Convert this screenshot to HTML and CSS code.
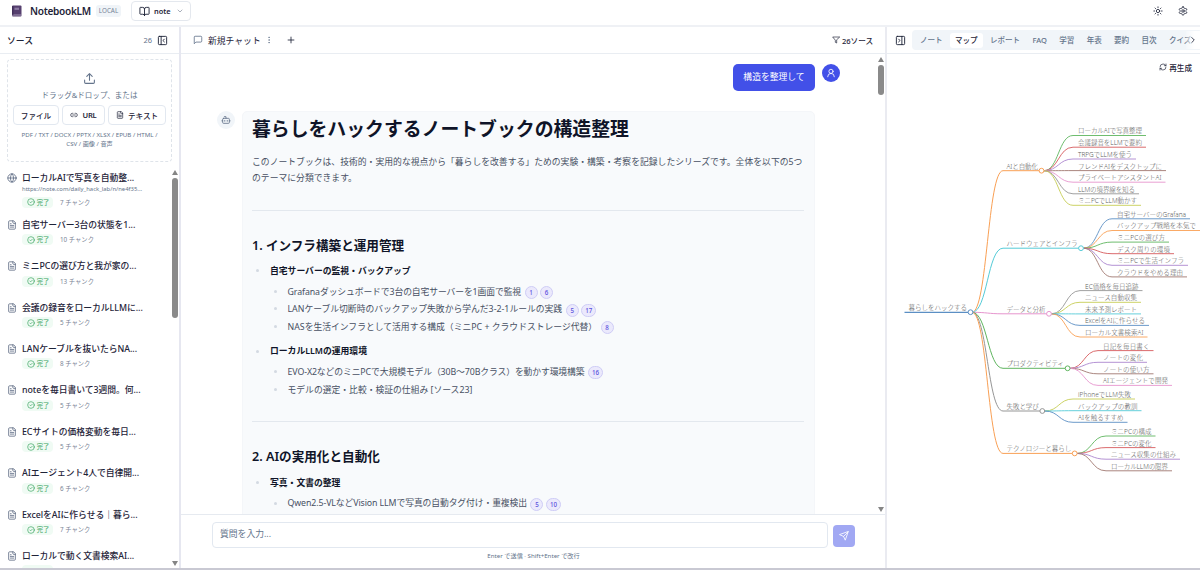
FILE: index.html
```html
<!DOCTYPE html>
<html lang="ja">
<head>
<meta charset="utf-8">
<title>NotebookLM</title>
<link rel="stylesheet" href="styles.css">
</head>
<body>
<svg class="defs" width="0" height="0">
  <symbol id="file" viewBox="0 0 24 24"><path d="M15 2H6a2 2 0 0 0-2 2v16a2 2 0 0 0 2 2h12a2 2 0 0 0 2-2V7z"/><path d="M14 2v4a2 2 0 0 0 2 2h4M10 9H8M16 13H8M16 17H8"/></symbol>
  <symbol id="globe" viewBox="0 0 24 24"><circle cx="12" cy="12" r="10"/><path d="M12 2a14.5 14.5 0 0 0 0 20 14.5 14.5 0 0 0 0-20M2 12h20"/></symbol>
  <symbol id="check" viewBox="0 0 24 24"><circle cx="12" cy="12" r="10"/><path d="m8.500 12 2.500 2.500 5-5"/></symbol>
  <symbol id="book" viewBox="0 0 24 24"><path d="M12 7v14M3 18a1 1 0 0 1-1-1V4a1 1 0 0 1 1-1h5a4 4 0 0 1 4 4 4 4 0 0 1 4-4h5a1 1 0 0 1 1 1v13a1 1 0 0 1-1 1h-6a3 3 0 0 0-3 3 3 3 0 0 0-3-3z"/></symbol>
  <symbol id="down" viewBox="0 0 24 24"><path d="m6 9 6 6 6-6"/></symbol>
  <symbol id="right" viewBox="0 0 24 24"><path d="m9 18 6-6-6-6"/></symbol>
  <symbol id="sun" viewBox="0 0 24 24"><circle cx="12" cy="12" r="4"/><path d="M12 2v2M12 20v2M4.9 4.9l1.4 1.4M17.7 17.7l1.4 1.4M2 12h2M20 12h2M6.3 17.7l-1.4 1.4M19.1 4.9l-1.4 1.4"/></symbol>
  <symbol id="gear" viewBox="0 0 24 24"><path d="M12.2 2h-.4a2 2 0 0 0-2 2v.2a2 2 0 0 1-1 1.700l-.4.3a2 2 0 0 1-2 0l-.2-.1a2 2 0 0 0-2.700.7l-.2.4a2 2 0 0 0 .7 2.700l.2.1a2 2 0 0 1 1 1.700v.5a2 2 0 0 1-1 1.800l-.2.1a2 2 0 0 0-.7 2.700l.2.4a2 2 0 0 0 2.700.7l.2-.1a2 2 0 0 1 2 0l.4.3a2 2 0 0 1 1 1.700v.2a2 2 0 0 0 2 2h.4a2 2 0 0 0 2-2v-.2a2 2 0 0 1 1-1.700l.4-.3a2 2 0 0 1 2 0l.2.1a2 2 0 0 0 2.700-.7l.2-.4a2 2 0 0 0-.7-2.700l-.2-.1a2 2 0 0 1-1-1.800v-.5a2 2 0 0 1 1-1.700l.2-.1a2 2 0 0 0 .7-2.700l-.2-.4a2 2 0 0 0-2.700-.7l-.2.1a2 2 0 0 1-2 0l-.4-.3a2 2 0 0 1-1-1.700V4a2 2 0 0 0-2-2z"/><circle cx="12" cy="12" r="3"/></symbol>
  <symbol id="panel-close" viewBox="0 0 24 24"><rect x="3" y="3" width="18" height="18" rx="2"/><path d="M9 3v18m7-6-3-3 3-3"/></symbol>
  <symbol id="panel-right" viewBox="0 0 24 24"><rect x="3" y="3" width="18" height="18" rx="2"/><path d="M15 3v18M8 9l3 3-3 3"/></symbol>
  <symbol id="upload" viewBox="0 0 24 24"><path d="M12 3v12M17 8l-5-5-5 5M21 15v4a2 2 0 0 1-2 2H5a2 2 0 0 1-2-2v-4"/></symbol>
  <symbol id="link" viewBox="0 0 24 24"><path d="M9 17H7A5 5 0 0 1 7 7h2M15 7h2a5 5 0 1 1 0 10h-2M8 12h8"/></symbol>
  <symbol id="chat" viewBox="0 0 24 24"><path d="M21 15a2 2 0 0 1-2 2H7l-4 4V5a2 2 0 0 1 2-2h14a2 2 0 0 1 2 2z"/></symbol>
  <symbol id="dots" viewBox="0 0 24 24"><circle cx="12" cy="4" r="1"/><circle cx="12" cy="12" r="1"/><circle cx="12" cy="20" r="1"/></symbol>
  <symbol id="plus" viewBox="0 0 24 24"><path d="M5 12h14M12 5v14"/></symbol>
  <symbol id="filter" viewBox="0 0 24 24"><path d="M22 3H2l8 9.5V19l4 2v-8.5z"/></symbol>
  <symbol id="user" viewBox="0 0 24 24"><circle cx="12" cy="8" r="5"/><path d="M20 21a8 8 0 0 0-16 0"/></symbol>
  <symbol id="bot" viewBox="0 0 24 24"><path d="M12 8V4H8"/><rect x="4" y="8" width="16" height="12" rx="2"/><path d="M2 14h2M20 14h2M15 13v2M9 13v2"/></symbol>
  <symbol id="refresh" viewBox="0 0 24 24"><path d="M3 12a9 9 0 0 1 9-9 9.8 9.8 0 0 1 6.7 2.7L21 8M21 3v5h-5M21 12a9 9 0 0 1-9 9 9.800 9.800 0 0 1-6.700-2.700L3 16M8 16H3v5"/></symbol>
  <symbol id="send" viewBox="0 0 24 24"><path d="M22 2 15 22l-4-9-9-4zM22 2 11 13"/></symbol>
</svg>

<div class="app">
  <header class="topbar">
    <svg class="logo" viewBox="0 0 11 12"><rect x="1" y=".5" width="9.500" height="11" rx="1" fill="#56406f"/><path d="M1 10h9.500" stroke="#b9aec8" stroke-width=".8"/><rect x="3.500" y="2.700" width="4.500" height="2.200" fill="#8c7aa3"/><path d="M1.800 1v9" stroke="#3a2950" stroke-width="1"/></svg>
    <span class="brand">NotebookLM</span>
    <span class="local">LOCAL</span>
    <button class="picker"><svg class="i i11"><use href="#book"/></svg><span>note</span><svg class="i i8 soft"><use href="#down"/></svg></button>
    <span class="grow"></span>
    <svg class="i i10"><use href="#sun"/></svg>
    <svg class="i i10 gear"><use href="#gear"/></svg>
  </header>

  <main class="columns">
    <aside class="sources">
      <div class="head"><span class="head-title">ソース</span><span class="grow"></span><span class="count">26</span><svg class="i i11"><use href="#panel-close"/></svg></div>
      <div class="drop">
        <svg class="i i13 slate"><use href="#upload"/></svg>
        <p class="drop-text">ドラッグ&amp;ドロップ、または</p>
        <div class="drop-buttons">
          <button class="btn b-file">ファイル</button>
          <button class="btn b-url"><svg class="i i8"><use href="#link"/></svg>URL</button>
          <button class="btn b-text"><svg class="i i8"><use href="#file"/></svg>テキスト</button>
        </div>
        <p class="formats">PDF / TXT / DOCX / PPTX / XLSX / EPUB / HTML /<br>CSV / 画像 / 音声</p>
      </div>
      <div class="list-wrap">
        <div class="list" id="list"></div>
        <div class="scroll"><i class="up"></i><i class="thumb thumb-list"></i><span class="grow"></span><i class="dn"></i></div>
      </div>
    </aside>

    <section class="chat">
      <div class="head chat-head">
        <svg class="i i10 slate"><use href="#chat"/></svg><span class="chat-tab">新規チャット</span><svg class="i i8 slate"><use href="#dots"/></svg>
        <svg class="i i10 add"><use href="#plus"/></svg><span class="grow"></span>
        <svg class="i i8"><use href="#filter"/></svg><span class="filter">26ソース</span>
      </div>
      <div class="stream">
        <div class="messages">
          <div class="mine"><span class="bubble">構造を整理して</span><span class="avatar me"><svg class="i i10"><use href="#user"/></svg></span></div>
          <div class="reply">
            <span class="avatar bot"><svg class="i i10"><use href="#bot"/></svg></span>
            <article class="card">
              <h1>暮らしをハックするノートブックの構造整理</h1>
              <p>このノートブックは、技術的・実用的な視点から「暮らしを改善する」ための実験・構築・考察を記録したシリーズです。全体を以下の5つ<br>のテーマに分類できます。</p>
              <hr>
              <h2>1. インフラ構築と運用管理</h2>
              <ul class="topics">
                <li><strong>自宅サーバーの監視・バックアップ</strong>
                  <ul>
                    <li><span class="tight">Grafanaダッシュボードで3台の自宅サーバーを1画面で監視</span><b>1</b><b>6</b></li>
                    <li><span>LANケーブル切断時のバックアップ失敗から学んだ3-2-1ルールの実践</span><b>5</b><b>17</b></li>
                    <li><span>NASを生活インフラとして活用する構成（ミニPC + クラウドストレージ代替）</span><b>8</b></li>
                  </ul></li>
                <li><strong>ローカルLLMの運用環境</strong>
                  <ul>
                    <li><span class="tight">EVO-X2などのミニPCで大規模モデル（30B～70Bクラス）を動かす環境構築</span><b>16</b></li>
                    <li><span>モデルの選定・比較・検証の仕組み [ソース23]</span></li>
                  </ul></li>
              </ul>
              <hr>
              <h2>2. AIの実用化と自動化</h2>
              <ul class="topics">
                <li><strong>写真・文書の整理</strong>
                  <ul><li><span class="tight">Qwen2.5-VLなどVision LLMで写真の自動タグ付け・重複検出</span><b>5</b><b>10</b></li></ul></li>
              </ul>
            </article>
          </div>
        </div>
        <div class="scroll"><i class="up"></i><i class="thumb thumb-chat"></i><span class="grow"></span><i class="dn"></i></div>
      </div>
      <div class="composer">
        <div class="compose-row"><div class="field">質問を入力...</div><button class="send"><svg class="i i10"><use href="#send"/></svg></button></div>
        <p class="hint">Enter で送信 · Shift+Enter で改行</p>
      </div>
    </section>

    <aside class="studio">
      <div class="head studio-head">
        <svg class="i i11"><use href="#panel-right"/></svg>
        <nav class="tabs"><span>ノート</span><span class="on">マップ</span><span>レポート</span><span>FAQ</span><span>学習</span><span>年表</span><span>要約</span><span>目次</span><span>クイズ</span></nav>
        <span class="more"><svg class="i i10"><use href="#right"/></svg></span>
      </div>
      <div class="regen"><svg class="i i8"><use href="#refresh"/></svg>再生成</div>
      <svg class="map" id="map" viewBox="887 80 313 488"></svg>
    </aside>
  </main>
</div>
<script src="app.js"></script>
</body>
</html>
```
FILE: styles.css
```css
* { box-sizing: border-box; }
body { margin: 0; background: #fff; color: #1e2338; font-family: "Noto Sans", "Noto Sans CJK JP", sans-serif; font-size: 8.8px; }
h1, h2, p, ul { margin: 0; padding: 0; }
ul { list-style: none; }
button { font: inherit; color: inherit; background: #fff; padding: 0; }
.defs { display: none; }
.app { width: 1200px; height: 570px; display: flex; flex-direction: column; overflow: hidden; border-bottom: 2px solid #c9c9d3; }
.grow { flex: 1; }
.i { fill: none; stroke: currentColor; stroke-width: 2; stroke-linecap: round; stroke-linejoin: round; flex: none; display: block; }
.i8 { width: 8px; height: 8px; }
.i10 { width: 10px; height: 10px; }
.i11 { width: 11px; height: 11px; }
.i13 { width: 13px; height: 13px; }
.slate { color: #64748b; }
.soft { color: #7d8798; }

.topbar { height: 27px; flex: none; display: flex; align-items: center; padding: 0 12px 3px 11px; border-bottom: 2px solid #eff1f5; }
.logo { width: 11px; height: 12px; }
.brand { margin-left: 8px; font-size: 10.1px; font-weight: 600; width: 60px; white-space: nowrap; letter-spacing: -.3px; }
.local { margin-left: 6px; width: 25px; height: 12px; line-height: 12px; border-radius: 3px; background: #f0f4f8; color: #748296; font-size: 6.3px; text-align: center; }
.picker { margin-left: 10px; width: 60px; height: 20px; border: 1px solid #e4e8ee; border-radius: 4px; display: flex; align-items: center; padding: 0 7px; font-size: 7.4px; font-weight: 600; }
.picker span { margin: 0 5px 0 4px; }
.gear { margin-left: 15px; }

.columns { flex: 1; display: flex; min-height: 0; }
.head { height: 27px; flex: none; display: flex; align-items: center; border-bottom: 1px solid #e9edf2; white-space: nowrap; }
.sources { width: 181px; border-right: 2px solid #e6e7f0; display: flex; flex-direction: column; }
.sources .head { padding: 0 11px 0 7px; }
.head-title { font-size: 8.8px; font-weight: 500; }
.count { color: #64748b; font-size: 7.5px; margin-right: 5px; }
.drop { margin: 5px 7px 0; height: 103px; flex: none; border: 1px dashed #dfe4ea; border-radius: 4px; display: flex; flex-direction: column; align-items: center; padding-top: 12px; }
.drop-text { margin-top: 4px; line-height: 13px; font-size: 7.55px; color: #64748b; white-space: nowrap; }
.drop-buttons { display: flex; gap: 3px; margin-top: 3px; }
.btn { height: 20px; border: 1px solid #e2e8f0; border-radius: 4px; display: flex; align-items: center; justify-content: center; gap: 4px; font-size: 7.6px; font-weight: 500; white-space: nowrap; }
.b-file { width: 46px; }
.b-url { width: 43px; font-weight: 600; letter-spacing: -.2px; }
.b-text { width: 58px; }
.formats { margin-top: 5px; line-height: 9.3px; font-size: 6.15px; color: #64748b; text-align: center; white-space: nowrap; }

.list-wrap { flex: 1; min-height: 0; display: flex; padding-top: 5px; }
.list { flex: 1; overflow: hidden; padding-left: 7px; }
.source { display: flex; gap: 5px; height: 41.4px; padding-top: 4px; }
.source:first-child { height: 46.8px; }
.source > .i { margin-top: 2px; color: #5f6c84; }
.name { height: 14px; line-height: 14px; font-weight: 500; white-space: nowrap; letter-spacing: -.04px; }
.url { height: 9px; line-height: 9px; font-size: 5.9px; color: #64748b; }
.meta { display: flex; align-items: center; margin-top: 2.500px; font-size: 6.3px; color: #7a8496; line-height: 11px; }
.badge { width: 31px; height: 11px; border-radius: 4px; background: #f0fbf4; color: #38a35f; display: flex; align-items: center; justify-content: center; gap: 2px; margin-right: 7px; font-size: 6.3px; padding-left: 1px; }

.scroll { width: 8px; flex: none; display: flex; flex-direction: column; align-items: center; }
.up { border: 3px solid transparent; border-top: 0; border-bottom: 5px solid #858585; }
.dn { border: 3px solid transparent; border-bottom: 0; border-top: 5px solid #858585; }
.thumb { width: 5.500px; border-radius: 3px; background: #8a8a8a; margin-top: 3px; }
.thumb-list { height: 140px; }
.list-wrap .scroll { padding: 3px 0 2px; }
.thumb-chat { height: 30px; }

.chat { width: 706px; border-right: 2px solid #eaebf1; display: flex; flex-direction: column; }
.chat-head { padding: 0 12px 0 12px; }
.chat-tab { margin: 0 4px 0 5px; }
.add { margin-left: 13px; }
.filter { margin-left: 2px; font-size: 7.6px; font-weight: 500; }
.stream { flex: 1; min-height: 0; display: flex; }
.stream .scroll { padding: 3px 0 2px; }
.messages { flex: 1; min-width: 0; overflow: hidden; padding: 10px 37px 0 36px; }
.mine { height: 47px; display: flex; justify-content: flex-end; gap: 7px; align-items: flex-start; }
.bubble { width: 82px; height: 27px; line-height: 26px; border-radius: 5px; background: #4250e8; color: #fff; text-align: center; }
.avatar { width: 18px; height: 18px; border-radius: 50%; display: flex; align-items: center; justify-content: center; flex: none; }
.me { background: #4250e8; color: #fff; }
.bot { background: #f1f5f9; color: #64748b; }
.reply { display: flex; gap: 7px; }
.card { width: 573px; height: 420px; flex: none; background: #f8fafc; border: 1px solid #f4f6f9; border-radius: 5px; padding: 5px 10px 0 9px; color: #475063; }
.card h1 { font-size: 18.85px; line-height: 24px; font-weight: 700; color: #0f1428; white-space: nowrap; }
.card p { margin-top: 14.400px; line-height: 15.400px; white-space: nowrap; letter-spacing: .02px; }
.card hr { margin: 23.800px 0 0; border: 0; border-top: 1px solid #e3e8ee; }
.card h2 { margin-top: 25.500px; line-height: 18px; font-size: 12.6px; font-weight: 600; color: #0f1428; }
.topics { margin-top: 8.300px; }
.topics > li { position: relative; padding-left: 18px; margin-bottom: 7px; line-height: 17px; }
.topics > li:last-child { margin-bottom: 0; }
.topics + hr { margin-top: 22.400px; }
.topics + hr + h2 { margin-top: 26px; }
.topics strong { font-weight: 600; color: #0f1428; }
.topics li li { position: relative; padding-left: 17.500px; height: 17.700px; display: flex; align-items: center; white-space: nowrap; }
.topics ul { padding-top: 3.400px; }
.topics li::before { content: ""; position: absolute; left: 4px; top: 6.500px; width: 3px; height: 3px; border-radius: 50%; background: #d3d9e2; }
.topics .tight { letter-spacing: -.1px; }
.topics b { min-width: 13px; height: 13px; line-height: 11px; border: 1px solid #cfcdf6; border-radius: 7px; background: #ebe9fc; color: #5a50dc; font-size: 6.2px; font-weight: 500; text-align: center; padding: 0 3px; margin: 1px -1px 0 3.500px; }

.composer { height: 54px; flex: none; border-top: 1px solid #e6eaf0; padding: 7px 30px 0 31px; }
.compose-row { display: flex; gap: 5px; align-items: flex-end; }
.field { width: 616px; height: 26px; line-height: 23px; border: 1px solid #e2e8f0; border-radius: 4px; padding-left: 7px; color: #64748b; }
.send { width: 22px; height: 22px; margin-bottom: 1px; border: 0; border-radius: 4px; background: #a1a8f3; color: #fff; display: flex; align-items: center; justify-content: center; }
.hint { margin-top: 3px; font-size: 6.15px; line-height: 10px; color: #64748b; text-align: center; }

.studio { flex: 1; min-width: 0; display: flex; flex-direction: column; }
.studio-head { position: relative; padding-left: 8px; }
.tabs { margin-left: 6px; height: 20px; flex: none; width: 290px; border-radius: 4px; background: #f1f5f9; display: flex; align-items: center; gap: 2.300px; padding: 0 3px; color: #64748b; font-size: 7.55px; font-weight: 500; overflow: hidden; }
.tabs span { padding: 0 5px; height: 15px; line-height: 14px; flex: none; }
.tabs .on { background: #fff; border-radius: 3px; color: #1e2338; }
.more { position: absolute; right: 0; top: 4px; width: 14px; height: 18px; display: flex; align-items: center; justify-content: center; background: linear-gradient(to right, rgba(255,255,255,.2), #fff 60%); }
.regen { height: 26px; flex: none; display: flex; align-items: center; justify-content: flex-end; gap: 2.500px; padding-right: 8px; font-size: 7.6px; font-weight: 500; }
.map { width: 313px; height: 488px; flex: none; display: block; }
.map text { font-size: 6.5px; font-weight: 300; fill: #5c5c5c; }
```
FILE: app.js
```js
const SVG = 'http://www.w3.org/2000/svg';

const sources = [
  ['ローカルAIで写真を自動整...', 7],
  ['自宅サーバー3台の状態を1...', 10],
  ['ミニPCの選び方と我が家の...', 13],
  ['会議の録音をローカルLLMに...', 5],
  ['LANケーブルを抜いたらNA...', 8],
  ['noteを毎日書いて3週間。何...', 5],
  ['ECサイトの価格変動を毎日...', 5],
  ['AIエージェント4人で自律開...', 6],
  ['ExcelをAIに作らせる｜暮ら...', 7],
  ['ローカルで動く文書検索AI...', null],
];

document.getElementById('list').innerHTML = sources.map(([name, chunks], n) => `
  <div class="source">
    <svg class="i i10"><use href="#${n ? 'file' : 'globe'}"/></svg>
    <div>
      <div class="name">${name}</div>
      ${n ? '' : '<div class="url">https://note.com/daily_hack_lab/n/ne4f35...</div>'}
      <div class="meta">${chunks ? `<span class="badge"><svg class="i i8"><use href="#check"/></svg>完了</span>${chunks} チャンク` : '<span class="badge"></span>'}</div>
    </div>
  </div>`).join('');

// Branch: label, colour, y, node x, leaf start x, leaves [label, y, end x, colour]
const C = { blue: '#5b8fc4', orange: '#f9a055', green: '#5fb55f', red: '#d65a5c', purple: '#ab86cf', brown: '#a07870', pink: '#e695ce', gray: '#969696', olive: '#c6cd55', cyan: '#55cbd7' };
const branches = [
  ['AIと自動化', 'orange', 170.7, 1041.5, 1073, [
    ['ローカルAIで写真整理', 135.5, 1146, 'green'], ['会議録音をLLMで要約', 147.2, 1146, 'red'],
    ['TRPGでLLMを使う', 159, 1136, 'purple'], ['フレンドAIをデスクトップに', 170.6, 1166, 'brown'],
    ['プライベートアシスタントAI', 182.2, 1165.500, 'pink'], ['LLMの境界線を知る', 193.8, 1139, 'gray'],
    ['ミニPCでLLM動かす', 205.3, 1141, 'olive']]],
  ['ハードウェアとインフラ', 'cyan', 248.2, 1081, 1112, [
    ['自宅サーバーのGrafana', 218.8, 1190, 'blue'], ['バックアップ戦略を本気で', 230.5, 1200, 'orange'],
    ['ミニPCの選び方', 242.1, 1169, 'green'], ['デスク周りの環境', 253.7, 1174, 'red'],
    ['ミニPCで生活インフラ', 265.3, 1188, 'purple'], ['クラウドをやめる理由', 276.9, 1187, 'brown']]],
  ['データと分析', 'pink', 313.8, 1049, 1080, [
    ['EC価格を毎日追跡', 290.6, 1142.500, 'gray'], ['ニュース自動収集', 302.3, 1141, 'olive'],
    ['未来予測レポート', 313.9, 1141, 'cyan'], ['ExcelをAIに作らせる', 325.4, 1149, 'blue'],
    ['ローカル文書検索AI', 337, 1147.500, 'orange']]],
  ['プロダクティビティ', 'green', 368.3, 1067.6, 1098, [
    ['日記を毎日書く', 350.6, 1153.500, 'red'], ['ノートの変化', 362.3, 1147, 'purple'],
    ['ノートの使い方', 373.8, 1153.500, 'brown'], ['AIエージェントで開発', 385.4, 1172, 'pink']]],
  ['失敗と学び', 'gray', 411, 1042.3, 1073, [
    ['iPhoneでLLM失敗', 399, 1135, 'olive'], ['バックアップの教訓', 410.7, 1141.500, 'cyan'],
    ['AIを触るすすめ', 422.3, 1127.500, 'blue']]],
  ['テクノロジーと暮らし', 'orange', 453.4, 1074.7, 1106, [
    ['ミニPCの構成', 436, 1155.500, 'green'], ['ミニPCの変化', 447.6, 1155.500, 'red'],
    ['ニュース収集の仕組み', 459.2, 1180, 'purple'], ['ローカルLLMの限界', 470.8, 1172, 'brown']]],
];

const map = document.getElementById('map');
function add(tag, attrs, text) {
  const el = document.createElementNS(SVG, tag);
  for (const k in attrs) el.setAttribute(k, attrs[k]);
  if (text) el.textContent = text;
  map.appendChild(el);
}
function link(x0, y0, x1, y1, end, colour, width) {
  const mid = (x0 + x1) / 2;
  add('path', { d: `M${x0} ${y0}C${mid} ${y0} ${mid} ${y1} ${x1} ${y1}H${end}`, fill: 'none', stroke: C[colour], 'stroke-width': width });
}
function node(x, y, colour) {
  add('circle', { cx: x, cy: y, r: 2.4, fill: '#fff', stroke: C[colour], 'stroke-width': 1 });
}
function label(x, y, end, text) {
  add('text', { x, y: y - 2.1, textLength: end - x }, text);
}

add('path', { d: 'M904.500 312.300H968', stroke: C.blue, 'stroke-width': 1.3 });
label(908.5, 312.3, 967, '暮らしをハックする');
for (const [name, colour, y, x, lx, leaves] of branches) {
  link(972, 312.3, 1003, y, x - 2, colour, 1);
  label(1006.500, y, x - 3.5, name);
  for (const [leaf, ly, end, c] of leaves) {
    link(x + 2.5, y, lx, ly, end, c, .9);
    label(lx + 5, ly, end - 4, leaf);
  }
  node(x, y, colour);
}
node(970.5, 312.2, 'blue');
```
